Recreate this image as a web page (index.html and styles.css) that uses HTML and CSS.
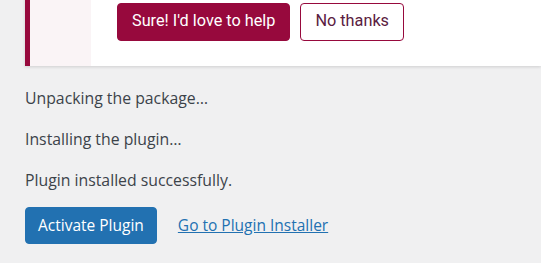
FILE: index.html
```html
<!DOCTYPE html>
<html>
<head>
<meta charset="utf-8">
<link rel="stylesheet" href="styles.css">
</head>
<body>
<div class="wrap">
  <div class="notice">
    <div class="notice-side"></div>
    <div class="notice-body">
      <div class="notice-actions">
        <a class="btn-yes" href="#">Sure! I'd love to help</a>
        <a class="btn-no" href="#">No thanks</a>
      </div>
    </div>
  </div>
  <div class="log">
    <p>Unpacking the package&hellip;</p>
    <p>Installing the plugin&hellip;</p>
    <p class="last">Plugin installed successfully.</p>
  </div>
  <div class="actions">
    <a class="button-primary" href="#">Activate Plugin</a>
    <a class="link" href="#">Go to Plugin Installer</a>
  </div>
</div>
</body>
</html>
```
FILE: styles.css
```css
html, body {
  margin: 0;
  padding: 0;
  background: #f0f0f1;
}
body {
  font-family: "Open Sans", "Noto Sans", sans-serif;
  font-size: 15.8px;
  color: #3c434a;
  overflow: hidden;
}
.wrap {
  padding-left: 25px;
}
.notice {
  display: flex;
  margin-top: -20px;
  background: #fff;
  border-left: 5px solid #97093d;
  box-shadow: 0 1px 3px rgba(0, 0, 0, 0.14);
}
.notice-side {
  width: 61px;
  flex: none;
  background: #faf4f6;
}
.notice-body {
  padding: 23px 0 25px 26px;
  font-family: Roboto, "Noto Sans", sans-serif;
  font-size: 16.25px;
}
.notice-actions {
  display: flex;
  gap: 10px;
}
.notice-actions a {
  display: block;
  height: 38px;
  box-sizing: border-box;
  line-height: 34px;
  padding: 0 14px 2px;
  border-radius: 4px;
  text-decoration: none;
  border: 1px solid #97093d;
}
.btn-yes {
  background: #97093d;
  color: #fff;
}
.btn-no {
  background: #fff;
  color: #5a2040;
  border-color: #7b1240;
}
.log {
  padding-top: 4px;
}
.log p {
  margin: 16.25px 0;
  line-height: 24.4px;
}
.log p.last {
  margin-bottom: 0;
}
.actions {
  margin-top: 15px;
  display: flex;
  align-items: center;
  gap: 21px;
}
.button-primary {
  display: block;
  height: 37px;
  box-sizing: border-box;
  line-height: 35px;
  padding: 0 12px;
  background: #2271b1;
  border: 1px solid #2271b1;
  border-radius: 4px;
  color: #fff;
  text-decoration: none;
  font-size: 15.5px;
}
.link {
  color: #2271b1;
  text-decoration: underline;
  font-size: 15.5px;
}
```
